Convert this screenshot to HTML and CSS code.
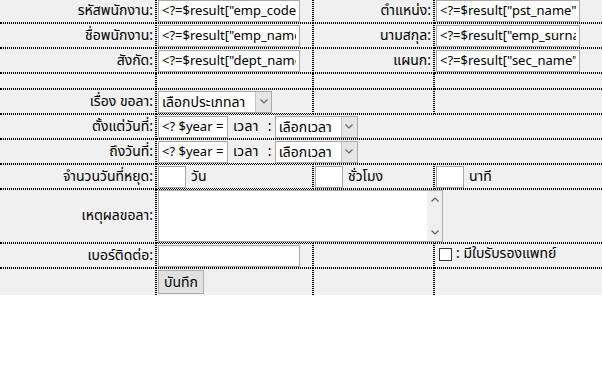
FILE: index.html
```html
<!DOCTYPE html>
<html lang="th">
<head>
<meta charset="utf-8">
<title>แบบฟอร์มขอลา</title>
<link rel="stylesheet" href="styles.css">
</head>
<body>
<form class="leave-form">
<table class="form-table">
<colgroup><col class="c1"><col class="c2"><col class="c3"><col class="c4"></colgroup>
<tr>
  <td class="label">รหัสพนักงาน:</td>
  <td><input class="text w-142" type="text" value='<?=$result["emp_code"]?>'></td>
  <td class="label">ตำแหน่ง:</td>
  <td><input class="text w-144" type="text" value='<?=$result["pst_name"]?>'></td>
</tr>
<tr>
  <td class="label">ชื่อพนักงาน:</td>
  <td><input class="text w-142" type="text" value='<?=$result["emp_name"]?>'></td>
  <td class="label">นามสกุล:</td>
  <td><input class="text w-144" type="text" value='<?=$result["emp_surname"]?>'></td>
</tr>
<tr>
  <td class="label">สังกัด:</td>
  <td><input class="text w-142" type="text" value='<?=$result["dept_name"]?>'></td>
  <td class="label">แผนก:</td>
  <td><input class="text w-144" type="text" value='<?=$result["sec_name"]?>'></td>
</tr>
<tr class="spacer">
  <td></td><td></td><td></td><td></td>
</tr>
<tr>
  <td class="label">เรื่อง ขอลา:</td>
  <td><span class="select w-114"><select><option>เลือกประเภทลา</option></select><span class="select-arrow"><svg width="8" height="5" viewBox="0 0 8 5"><path d="M0.5 0.5 L4 4 L7.5 0.5" fill="none" stroke="#56667f" stroke-width="1.2"/></svg></span></span></td>
  <td></td>
  <td></td>
</tr>
<tr>
  <td class="label">ตั้งแต่วันที่:</td>
  <td colspan="3"><input class="text w-70" type="text" value='<? $year = date("Y"); ?>'><span class="sep">เวลา :</span><span class="select w-83"><select><option>เลือกเวลา</option></select><span class="select-arrow"><svg width="8" height="5" viewBox="0 0 8 5"><path d="M0.5 0.5 L4 4 L7.5 0.5" fill="none" stroke="#56667f" stroke-width="1.2"/></svg></span></span></td>
</tr>
<tr>
  <td class="label">ถึงวันที่:</td>
  <td colspan="3"><input class="text w-70" type="text" value='<? $year = date("Y"); ?>'><span class="sep">เวลา :</span><span class="select w-83"><select><option>เลือกเวลา</option></select><span class="select-arrow"><svg width="8" height="5" viewBox="0 0 8 5"><path d="M0.5 0.5 L4 4 L7.5 0.5" fill="none" stroke="#56667f" stroke-width="1.2"/></svg></span></span></td>
</tr>
<tr>
  <td class="label">จำนวนวันที่หยุด:</td>
  <td><input class="text w-28" type="text"><span class="unit">วัน</span></td>
  <td><input class="text w-28" type="text"><span class="unit">ชั่วโมง</span></td>
  <td><input class="text w-28" type="text"><span class="unit">นาที</span></td>
</tr>
<tr class="tall">
  <td class="label">เหตุผลขอลา:</td>
  <td colspan="3"><span class="textarea-wrap"><textarea></textarea><span class="scrollbar"><svg width="8" height="5" viewBox="0 0 8 5"><path d="M0.5 4.5 L4 1 L7.5 4.5" fill="none" stroke="#606060" stroke-width="1.2"/></svg><svg width="8" height="5" viewBox="0 0 8 5"><path d="M0.5 0.5 L4 4 L7.5 0.5" fill="none" stroke="#606060" stroke-width="1.2"/></svg></span></span></td>
</tr>
<tr>
  <td class="label">เบอร์ติดต่อ:</td>
  <td><input class="text w-142" type="text"></td>
  <td></td>
  <td><label class="check"><input type="checkbox"><span> : มีใบรับรองแพทย์</span></label></td>
</tr>
<tr class="last">
  <td></td>
  <td><button type="submit" class="btn">บันทึก</button></td>
  <td></td>
  <td></td>
</tr>
</table>
</form>
</body>
</html>
```

FILE: styles.css
```css
html, body {
  margin: 0;
  padding: 0;
  overflow: hidden;
  background: #ffffff;
}
body {
  font-family: Tahoma, "Noto Sans Thai", "Noto Sans", "DejaVu Sans", sans-serif;
  font-size: 14px;
  color: #000;
}
.leave-form { margin: 0; }
.form-table {
  border-collapse: separate;
  border-spacing: 0;
  background: #f0f0f0;
  width: 602px;
  table-layout: fixed;
  margin-top: -1px;
}
.c1 { width: 156px; }
.c2 { width: 157px; }
.c3 { width: 121px; }
.c4 { width: 168px; }
.form-table td {
  border: 1px dotted #000;
  padding: 0 1px;
  height: 23px;
  line-height: 18px;
  vertical-align: middle;
  white-space: nowrap;
  overflow: hidden;
}
.form-table tr:first-child td { border-top: none; }
.form-table tr.last td { border-bottom: none; height: 26px; }
.form-table td:first-child { border-left: none; }
.form-table td:last-child { border-right: none; }
.form-table td.label { text-align: right; padding-right: 2px; }
.spacer td { height: 14px; line-height: 0; font-size: 0; }
.tall td { height: 52px; }

input.text, select, textarea, .btn {
  font-family: inherit;
  color: #000;
  margin: 0;
  box-sizing: border-box;
}
input.text, textarea { font-size: 13px; }
select, .btn { font-size: 14px; }
input.text {
  height: 22px;
  border: 1px solid #a9a9a9;
  background: #fff;
  padding: 0 3px;
  vertical-align: middle;
  outline: none;
}
.w-142 { width: 142px; }
.w-144 { width: 144px; }
.w-70 { width: 70px; }
.w-28 { width: 28px; }

.select {
  position: relative;
  display: inline-block;
  vertical-align: middle;
  height: 22px;
}
.select select {
  appearance: none;
  -webkit-appearance: none;
  width: 100%;
  height: 22px;
  border: 1px solid #a9a9a9;
  background: #fff;
  padding: 0 18px 0 3px;
  border-radius: 0;
  outline: none;
}
.w-114 { width: 114px; }
.w-83 { width: 83px; }
.select-arrow {
  position: absolute;
  right: 1px;
  top: 1px;
  bottom: 1px;
  width: 15px;
  background: #e5e5e5;
  border-left: 1px solid #c4c4c4;
  display: flex;
  align-items: center;
  justify-content: center;
  pointer-events: none;
}
.sep {
  display: inline-block;
  vertical-align: middle;
  margin: 0 3px 0 5px;
  word-spacing: 5px;
  letter-spacing: 0.3px;
}
.unit {
  display: inline-block;
  vertical-align: middle;
  margin-left: 5px;
}

.textarea-wrap {
  position: relative;
  display: block;
  width: 285px;
  height: 52px;
}
.textarea-wrap textarea {
  display: block;
  width: 285px;
  height: 52px;
  border: 1px solid #a9a9a9;
  background: #fff;
  resize: none;
  padding: 2px;
  overflow: hidden;
  outline: none;
}
.scrollbar {
  position: absolute;
  right: 1px;
  top: 1px;
  bottom: 1px;
  width: 15px;
  background: #f0f0f0;
  display: flex;
  flex-direction: column;
  align-items: center;
  justify-content: space-between;
  padding: 6px 0;
  box-sizing: border-box;
  pointer-events: none;
}

.check {
  display: inline-flex;
  align-items: center;
  margin-left: 3px;
}
.check input {
  appearance: none;
  -webkit-appearance: none;
  width: 13px;
  height: 13px;
  margin: 0 4px 0 0;
  border: 1px solid #333;
  background: #fff;
  box-sizing: border-box;
}

.btn {
  height: 24px;
  padding: 0 5px;
  border: 1px solid #adadad;
  background: #e1e1e1;
  border-radius: 0;
  vertical-align: middle;
}
```
